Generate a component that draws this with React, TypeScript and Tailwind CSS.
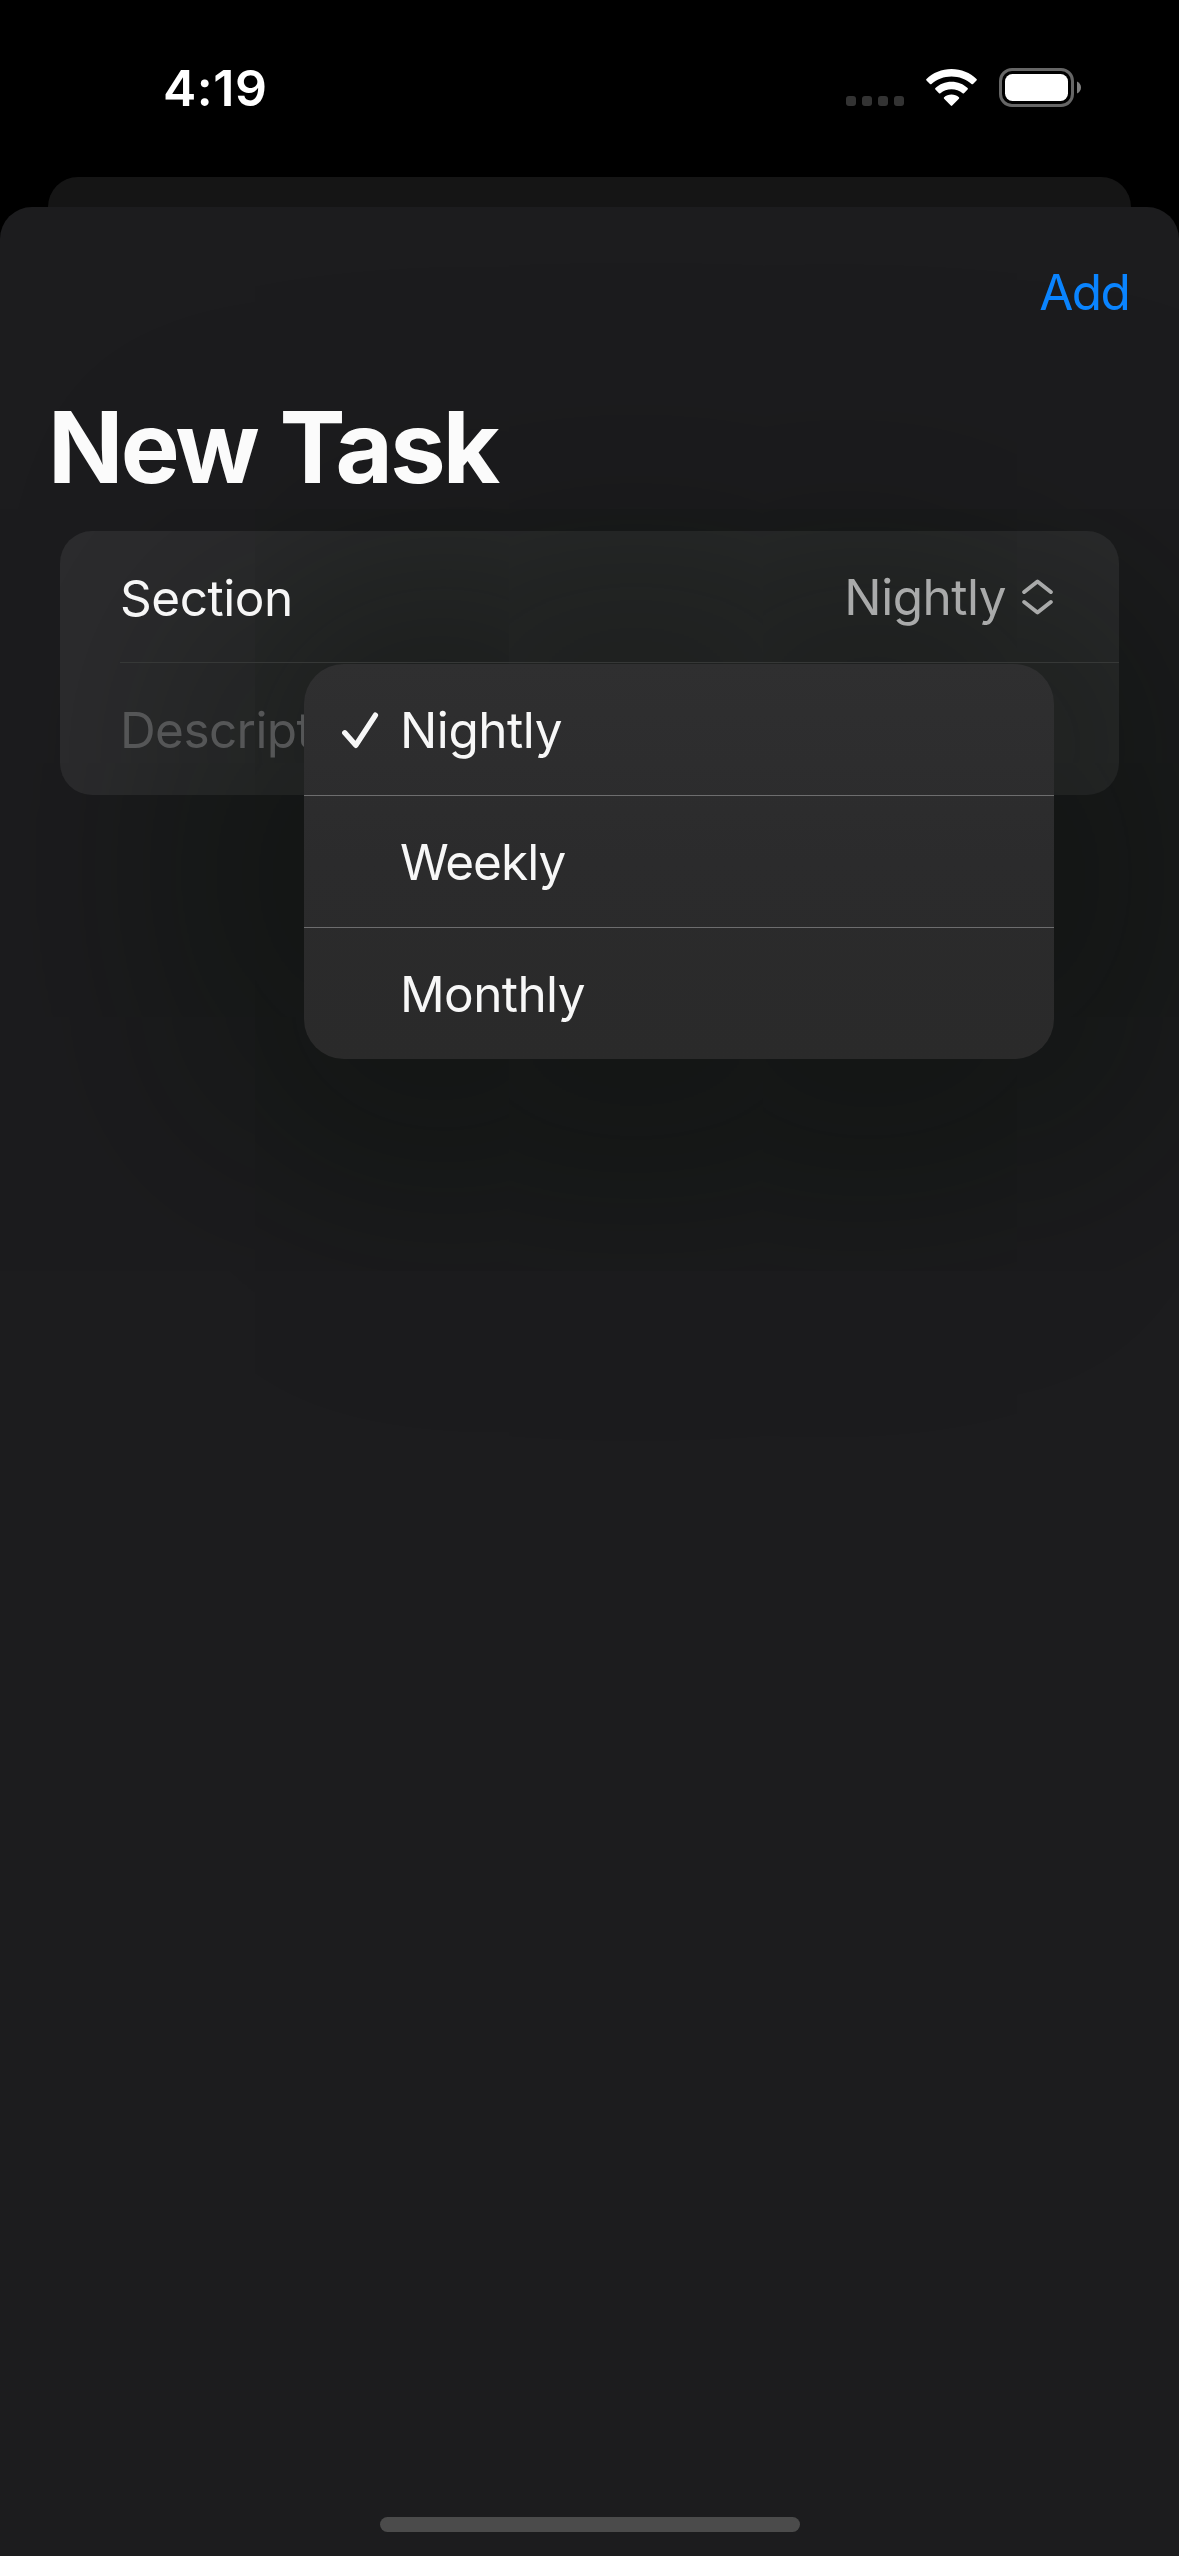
import React from "react";

const options = [
  { label: "Nightly", spacing: "tracking-[-0.45px]" },
  { label: "Weekly", spacing: "tracking-[-1px]" },
  { label: "Monthly", spacing: "tracking-[-0.6px]" },
];

function StatusBar() {
  return (
    <header className="flex h-[177px] items-start justify-between pl-[163px] pr-[97px]">
      <time className="mt-[58px] text-[50px] font-semibold leading-[60px] tracking-[0.5px] text-white">4:19</time>
      <div className="mt-[68px] flex h-[40px]">
        <div className="mt-[28px] flex gap-[6px]">
          {[0, 1, 2, 3].map((i) => (
            <span key={i} className="h-[10px] w-[10px] rounded-[3px] bg-[#333333]" />
          ))}
        </div>
        <svg className="ml-[22px] mt-[1px]" width="51" height="38" viewBox="0 0 51 38" fill="white">
          <path d="M25.500 0C35.200 0 44.200 3.800 50.500 10Q51.200 10.700 50.500 11.400L47 15Q46.200 15.700 45.500 15C40 10.200 33 7.500 25.500 7.500S11 10.200 5.500 15Q4.800 15.700 4 15L0.500 11.400Q-0.200 10.700 0.500 10C6.800 3.800 15.800 0 25.500 0Z" />
          <path d="M25.500 12.800C31.800 12.800 37.500 15.200 41.600 19.100Q42.300 19.800 41.600 20.500L38 24.200Q37.300 24.900 36.600 24.200C33.500 21.700 29.700 20.300 25.500 20.300S17.500 21.700 14.400 24.200Q13.700 24.900 13 24.200L9.400 20.500Q8.700 19.800 9.400 19.100C13.500 15.200 19.200 12.800 25.500 12.800Z" />
          <path d="M25.500 25.600C28.300 25.600 30.900 26.600 32.900 28.300Q33.600 29 32.900 29.700L26.200 36.600Q25.500 37.300 24.800 36.600L18.100 29.700Q17.400 29 18.100 28.300C20.100 26.600 22.700 25.600 25.500 25.600Z" />
        </svg>
        <svg className="ml-[22px]" width="83" height="39" viewBox="0 0 83 39" fill="none">
          <rect x="1.500" y="1.500" width="72" height="36" rx="11.500" stroke="#666666" strokeWidth="3" />
          <rect x="6" y="6" width="63" height="27" rx="7.500" fill="white" />
          <path d="M78 13.500C80.500 14.600 82 16.900 82 19.500S80.500 24.400 78 25.500Z" fill="#808080" />
        </svg>
      </div>
    </header>
  );
}

function Menu() {
  return (
    <div className="absolute left-[244px] top-[133px] z-20 h-[395px] w-[750px] overflow-hidden rounded-[40px] bg-linear-to-b from-[#2f2f30] via-[#2b2b2c] to-[#2a2a2a] text-[#f7f7f7]">
      {options.map((option, index) => (
        <div
          key={option.label}
          className={
            index === 2
              ? "flex h-[131px] items-center pl-[36px] pt-px"
              : "flex h-[132px] items-center border-b border-[#6d6d6e] pl-[36px] pt-px"
          }
        >
          <span className="w-[60px] shrink-0">
            {index === 0 && (
              <svg className="ml-[2px]" width="37" height="37" viewBox="0 0 37 37" fill="none" stroke="#f7f7f7" strokeWidth="5.400" strokeLinecap="round" strokeLinejoin="round">
                <path d="M2.800 20.800L13.800 33.300L33.400 3.200" />
              </svg>
            )}
          </span>
          <span className={option.spacing}>{option.label}</span>
        </div>
      ))}
    </div>
  );
}

export default function App() {
  return (
    <div className="flex h-[2556px] w-[1179px] flex-col overflow-hidden bg-black font-[Inter,sans-serif] text-[49.5px] leading-[60px]">
      <StatusBar />
      <div className="mx-[48px] h-[30px] shrink-0 rounded-t-[30px] bg-[#151515]" />
      <main className="flex min-h-0 flex-1 flex-col overflow-hidden rounded-t-[32px] bg-[#1c1c1e]">
        <div className="relative z-10 flex h-[174px] shrink-0 justify-end pr-[50px] pt-[55px]">
          <button className="h-[60px] tracking-[-1.7px] text-[#0a84ff]">Add</button>
        </div>
        <h1 className="relative z-10 h-[150px] shrink-0 pl-[48px] pt-[6px] text-[99px] font-bold leading-[120px] tracking-[-2.8px] text-[#fbfbfb] [word-spacing:2px]">
          New Task
        </h1>
        <section className="relative mx-[60px] h-[264px] shrink-0 rounded-[32px] bg-[#2c2c2e]">
          <div className="pointer-events-none absolute left-[244px] top-[133px] h-[395px] w-[750px] rounded-[80px] shadow-[0_0_300px_95px_rgba(4,12,4,0.52)]" />
          <div className="relative z-10 ml-[60px] flex h-[132px] items-center justify-between border-b border-[#363837] pr-[66px] pt-px">
            <span className="pt-[2px] tracking-[-0.45px] text-[#f6f6f6]">Section</span>
            <span className="flex items-center text-[#a9aaaa]">
              <span className="tracking-[-0.5px]">Nightly</span>
              <svg className="ml-[16px]" width="31" height="36" viewBox="0 0 31 36" fill="none" stroke="currentColor" strokeWidth="4" strokeLinecap="round" strokeLinejoin="round">
                <path d="M2.200 13L15.500 2.500L28.800 13M2.200 23L15.500 33.500L28.800 23" />
              </svg>
            </span>
          </div>
          <div className="relative z-10 ml-[60px] flex h-[132px] items-center pt-[2px] tracking-[-0.6px] text-[#555657]">Description</div>
          <Menu />
        </section>
        <div className="mx-auto mb-[24px] mt-auto h-[15px] w-[420px] shrink-0 rounded-full bg-[#4b4b4b]" />
      </main>
    </div>
  );
}
